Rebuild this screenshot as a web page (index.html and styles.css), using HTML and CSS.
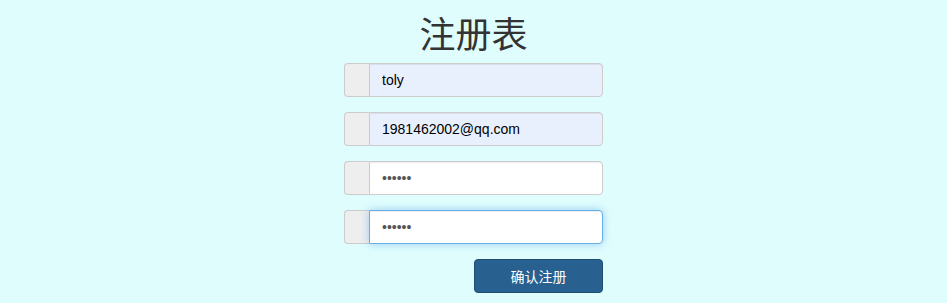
FILE: index.html
```html
<!DOCTYPE html>
<html lang="zh-CN">
<head>
<meta charset="utf-8">
<title>注册表</title>
<link rel="stylesheet" href="styles.css">
</head>
<body>
<div class="page">
  <form class="register">
    <h1 class="title">注册表</h1>
    <div class="input-group">
      <span class="addon"></span>
      <input class="field autofill" type="text" value="toly">
    </div>
    <div class="input-group">
      <span class="addon"></span>
      <input class="field autofill" type="text" value="1981462002@qq.com">
    </div>
    <div class="input-group">
      <span class="addon"></span>
      <input class="field" type="password" value="123456">
    </div>
    <div class="input-group">
      <span class="addon"></span>
      <input class="field focused" type="password" value="123456">
    </div>
    <div class="actions">
      <button class="btn-primary" type="button">确认注册</button>
    </div>
  </form>
</div>
</body>
</html>
```
FILE: styles.css
```css
html, body {
  margin: 0;
  padding: 0;
}
body {
  background: #e0fdfd;
  font-family: "Liberation Sans", Arial, "Noto Sans CJK SC", sans-serif;
  font-size: 14px;
  color: #333;
}
.page {
  display: flex;
  justify-content: center;
}
.register {
  width: 259px;
  display: flex;
  flex-direction: column;
}
.title {
  margin: 12px 0 10px;
  font-family: "Noto Sans CJK SC", "Liberation Sans", sans-serif;
  font-size: 36px;
  line-height: 41px;
  font-weight: 400;
  text-align: center;
  color: #333;
}
.input-group {
  display: flex;
  height: 34px;
  margin-bottom: 15px;
}
.addon {
  width: 24px;
  flex: none;
  background: #eee;
  border: 1px solid #ccc;
  border-right: 0;
  border-radius: 4px 0 0 4px;
}
.field {
  flex: 1;
  min-width: 0;
  box-sizing: border-box;
  height: 34px;
  padding: 6px 12px;
  border: 1px solid #ccc;
  border-radius: 0 4px 4px 0;
  background: #fff;
  color: #555;
  font-family: "Liberation Sans", Arial, sans-serif;
  font-size: 14px;
  line-height: 20px;
  box-shadow: inset 0 1px 1px rgba(0, 0, 0, .075);
  outline: none;
}
.field.autofill {
  background: #e8f0fe;
  color: #000;
}
.field.focused {
  border-color: #66afe9;
  box-shadow: inset 0 1px 1px rgba(0, 0, 0, .075), 0 0 8px rgba(102, 175, 233, .6);
}
.actions {
  display: flex;
  justify-content: flex-end;
}
.btn-primary {
  width: 129px;
  height: 34px;
  box-sizing: border-box;
  padding: 6px 12px;
  border: 1px solid #204d74;
  border-radius: 4px;
  background: #286090;
  color: #fff;
  font-family: "Noto Sans CJK SC", "Liberation Sans", sans-serif;
  font-size: 14px;
  line-height: 20px;
}
```
